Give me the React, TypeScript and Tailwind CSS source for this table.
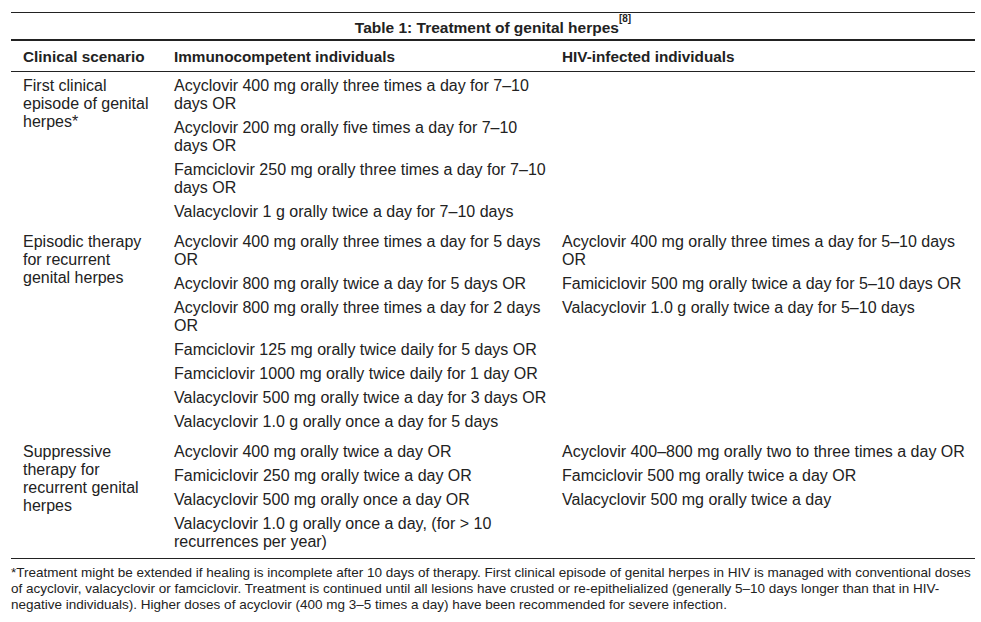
const rows: { scenario: string; immuno: string[]; hiv: string[] }[] = [
  {
    scenario: 'First clinical episode of genital herpes*',
    immuno: [
      'Acyclovir 400 mg orally three times a day for 7–10 days OR',
      'Acyclovir 200 mg orally five times a day for 7–10 days OR',
      'Famciclovir 250 mg orally three times a day for 7–10 days OR',
      'Valacyclovir 1 g orally twice a day for 7–10 days',
    ],
    hiv: [],
  },
  {
    scenario: 'Episodic therapy for recurrent genital herpes',
    immuno: [
      'Acyclovir 400 mg orally three times a day for 5 days OR',
      'Acyclovir 800 mg orally twice a day for 5 days OR',
      'Acyclovir 800 mg orally three times a day for 2 days OR',
      'Famciclovir 125 mg orally twice daily for 5 days OR',
      'Famciclovir 1000 mg orally twice daily for 1 day OR',
      'Valacyclovir 500 mg orally twice a day for 3 days OR',
      'Valacyclovir 1.0 g orally once a day for 5 days',
    ],
    hiv: [
      'Acyclovir 400 mg orally three times a day for 5–10 days OR',
      'Famiciclovir 500 mg orally twice a day for 5–10 days OR',
      'Valacyclovir 1.0 g orally twice a day for 5–10 days',
    ],
  },
  {
    scenario: 'Suppressive therapy for recurrent genital herpes',
    immuno: [
      'Acyclovir 400 mg orally twice a day OR',
      'Famiciclovir 250 mg orally twice a day OR',
      'Valacyclovir 500 mg orally once a day OR',
      'Valacyclovir 1.0 g orally once a day, (for > 10 recurrences per year)',
    ],
    hiv: [
      'Acyclovir 400–800 mg orally two to three times a day OR',
      'Famciclovir 500 mg orally twice a day OR',
      'Valacyclovir 500 mg orally twice a day',
    ],
  },
];

function Items({ list }: { list: string[] }) {
  return (
    <div className="flex flex-col gap-[6px]">
      {list.map((t) => (
        <p key={t}>{t}</p>
      ))}
    </div>
  );
}

export default function App() {
  return (
    <div className="bg-white w-[981px] h-[622px] pt-[12px] text-[#222] font-['Liberation_Sans',Arial,sans-serif]">
      <div className="ml-[11px] w-[964px]">
        <div className="border-t border-[#222] h-[27px] pt-[4px] flex items-center justify-center text-[15.5px] font-bold">
          <span>
            Table 1: Treatment of genital herpes<sup className="text-[10px] align-[6px]">[8]</sup>
          </span>
        </div>
        <div className="border-t-2 border-[#222] grid grid-cols-[163px_388px_1fr] h-[33px] pt-[3px] items-center text-[15.3px] font-bold border-b">
          <div className="pl-[12px]">Clinical scenario</div>
          <div>Immunocompetent individuals</div>
          <div>HIV-infected individuals</div>
        </div>
        <div className="text-[16px] leading-[18px] border-b border-[#222]">
          {rows.map((r) => (
            <div key={r.scenario} className="grid grid-cols-[163px_388px_1fr] pt-[5px] pb-[7px]">
              <div className="pl-[12px] pr-[21px]">{r.scenario}</div>
              <div className="pr-[14px]">
                <Items list={r.immuno} />
              </div>
              <div>
                <Items list={r.hiv} />
              </div>
            </div>
          ))}
        </div>
        <p className="pt-[6px] text-[13.5px] leading-[16px]">
          *Treatment might be extended if healing is incomplete after 10 days of therapy. First clinical episode of genital herpes in HIV is managed with conventional doses of acyclovir, valacyclovir or famciclovir. Treatment is continued until all lesions have crusted or re-epithelialized (generally 5–10 days longer than that in HIV-negative individuals). Higher doses of acyclovir (400 mg 3–5 times a day) have been recommended for severe infection.
        </p>
      </div>
    </div>
  );
}
